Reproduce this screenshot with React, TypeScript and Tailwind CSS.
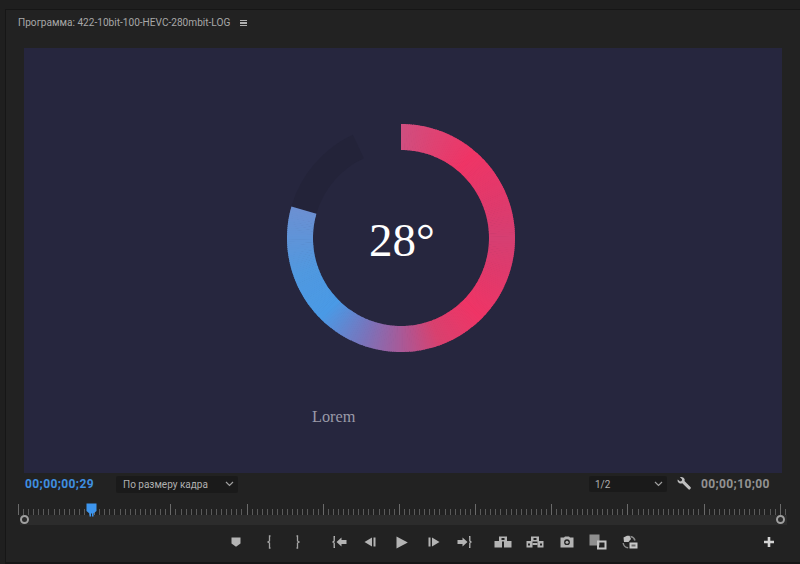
import React from "react";

const stops: [number, number[]][] = [
  [0, [0xcf, 0x4f, 0x80]],
  [20, [0xe0, 0x42, 0x72]],
  [40, [0xef, 0x35, 0x66]],
  [70, [0xe0, 0x3a, 0x6c]],
  [90, [0xd6, 0x3f, 0x72]],
  [110, [0xe0, 0x3a, 0x6c]],
  [135, [0xef, 0x35, 0x66]],
  [160, [0xd9, 0x41, 0x6f]],
  [180, [0xa8, 0x5a, 0x98]],
  [200, [0x7a, 0x74, 0xbb]],
  [225, [0x4a, 0x9a, 0xe6]],
  [250, [0x50, 0x99, 0xe0]],
  [286, [0x6c, 0x90, 0xd2]],
];

function colorAt(a: number) {
  for (let i = 0; i < stops.length - 1; i++) {
    const [a0, c0] = stops[i];
    const [a1, c1] = stops[i + 1];
    if (a >= a0 && a <= a1) {
      const t = (a - a0) / (a1 - a0);
      const c = c0.map((v, k) => Math.round(v + (c1[k] - v) * t));
      return `rgb(${c[0]},${c[1]},${c[2]})`;
    }
  }
  return "rgb(108,144,210)";
}

const CX = 120;
const CY = 120;
const R = 101;

function pt(a: number, r = R) {
  const rad = ((a - 90) * Math.PI) / 180;
  return [CX + r * Math.cos(rad), CY + r * Math.sin(rad)];
}

function arc(a0: number, a1: number) {
  const [x0, y0] = pt(a0);
  const [x1, y1] = pt(a1);
  return `M${x0.toFixed(2)} ${y0.toFixed(2)}A${R} ${R} 0 0 1 ${x1.toFixed(2)} ${y1.toFixed(2)}`;
}

function Ring() {
  const segs = [];
  for (let a = 0; a < 286; a += 1) {
    segs.push(
      <path key={a} d={arc(a, Math.min(a + 1.4, 286))} stroke={colorAt(a + 0.5)} strokeWidth={26} fill="none" />
    );
  }
  return (
    <svg width="240" height="240" viewBox="0 0 240 240" className="block">
      <path d={arc(286, 335)} stroke="#232339" strokeWidth={26} fill="none" />
      {segs}
    </svg>
  );
}

function Ruler() {
  const ticks = [];
  for (let i = 0; i < 152; i++) {
    ticks.push(
      <div key={i} className="w-[5.08px] h-[11px] shrink-0 flex items-end">
        <span className={i % 15 === 0 ? "w-px h-[11px] bg-[#6a6a6a]" : "w-px h-[6px] bg-[#5a5a5a]"} />
      </div>
    );
  }
  return <div className="flex h-[11px]">{ticks}</div>;
}

const I = ({ w = 16, h = 14, children }: { w?: number; h?: number; children: React.ReactNode }) => (
  <svg width={w} height={h} viewBox={`0 0 ${w} ${h}`} className="block text-[#b4b4b4]" fill="currentColor">
    {children}
  </svg>
);

const Marker = () => (
  <I w={10} h={10}>
    <path d="M.5.5h9v6L5 9.700.5 6.500z" />
  </I>
);
const MarkIn = () => (
  <I w={6} h={14}>
    <path d="M4.500 1H3.500V6L2 7l1.500 1v5h1" fill="none" stroke="#a4a4a4" strokeWidth="1.300" />
  </I>
);
const MarkOut = () => (
  <I w={6} h={14}>
    <path d="M1.500 1h1V6L4 7 2.500 8v5h-1" fill="none" stroke="#a4a4a4" strokeWidth="1.300" />
  </I>
);
const GoIn = () => (
  <I w={15} h={12}>
    <path d="M3 .5H2.200V5L1 6l1.200 1v4.500H3" fill="none" stroke="currentColor" strokeWidth="1.300" />
    <path d="M4.500 6l5-4.500V4h5v4h-5v2.500z" />
  </I>
);
const GoOut = () => (
  <I w={15} h={12}>
    <path d="M12 .5h.8V5L14 6l-1.200 1v4.500H12" fill="none" stroke="currentColor" strokeWidth="1.300" />
    <path d="M10.500 6l-5-4.500V4h-5v4h5v2.500z" />
  </I>
);
const StepBack = () => (
  <I w={12} h={10}>
    <path d="M8 .5v9L.5 5z" />
    <rect x="9.500" y=".5" width="2" height="9" />
  </I>
);
const StepFwd = () => (
  <I w={12} h={10}>
    <path d="M4 .5v9L11.500 5z" />
    <rect x=".5" y=".5" width="2" height="9" />
  </I>
);
const Play = () => (
  <I w={12} h={13}>
    <path d="M.5.5 11.800 6.500.5 12.500z" />
  </I>
);
const Lift = () => (
  <I w={18} h={12}>
    <path d="M5 .5h8v5H5zM7.500 2v2h3V2z" fillRule="evenodd" />
    <rect x=".5" y="5" width="7.500" height="6.500" />
    <rect x="10" y="5" width="7.500" height="6.500" />
  </I>
);
const Extract = () => (
  <I w={18} h={12}>
    <path d="M5 .5h8v5H5zM7.500 2v2h3V2z" fillRule="evenodd" />
    <path d="M.5 5h6v6.500h-6zM2 7.500v2h2v-2zM11.500 5h6v6.500h-6zM14 7.500v2h2v-2z" fillRule="evenodd" />
    <rect x="6.500" y="7" width="5" height="2" />
  </I>
);
const Camera = () => (
  <I w={14} h={12}>
    <path
      d="M4 1.500 5 .5h4l1 1h3.500v10H.5v-10zM7 3.300a2.900 2.900 0 1 0 0 5.800 2.900 2.900 0 0 0 0-5.800z"
      fillRule="evenodd"
    />
    <circle cx="7" cy="6.200" r="1.500" />
  </I>
);
const Compare = () => (
  <I w={18} h={16}>
    <rect x=".5" y=".5" width="10" height="11" fill="#8f8f8f" />
    <path d="M8 6.500h9.500v9H8zM10 8.500v5h5.500v-5z" fillRule="evenodd" fill="#c4c4c4" />
  </I>
);
const Export = () => (
  <I w={16} h={14}>
    <path d="M1.500 2.500 5 .8h2.500L9 4 6.500 7 2 7z" fill="#c0c0c0" />
    <path
      d="M8.500 1.500a5.600 5.600 0 0 1 4.500 4M1.200 8a5.600 5.600 0 0 0 5 4.800"
      fill="none"
      stroke="#8a8a8a"
      strokeWidth="1.500"
    />
    <path d="M7.500 7.500h8v6h-8z" fill="#c8c8c8" />
    <rect x="9.500" y="9.500" width="4" height="2" fill="#6a6a6a" />
  </I>
);
const Plus = () => (
  <I w={10} h={10}>
    <path d="M3.700 0h2.600v3.700H10v2.600H6.300V10H3.700V6.300H0V3.700h3.700z" fill="#d4d4d4" />
  </I>
);
const Wrench = () => (
  <I w={14} h={14}>
    <path d="M.8 2.400 3 4.500l1.700-.5.400-1.800L3 .2C4.800-.4 6.800.4 7.500 2c.2.700.2 1.400 0 2l6.200 6.200c.6.800-1 3-2 2.300L5.300 6.300C3.800 6.900 2.200 6.500 1.200 5.300.5 4.400.4 3.400.8 2.400z" fill="#c0c0c0" />
  </I>
);
const Chevron = () => (
  <svg width="9" height="6" viewBox="0 0 9 6" className="block" fill="none" stroke="#a0a0a0" strokeWidth="1.200">
    <path d="M1 1l3.500 3.500L8 1" />
  </svg>
);
const Menu = () => (
  <div className="flex flex-col gap-[1.5px] w-[7px] ml-[10px]">
    <span className="h-[1.200px] bg-[#b0b0b0]" />
    <span className="h-[1.200px] bg-[#b0b0b0]" />
    <span className="h-[1.200px] bg-[#b0b0b0]" />
  </div>
);

const Slot = ({ ml, children }: { ml: string; children: React.ReactNode }) => (
  <div className={`w-[18px] flex justify-center ${ml}`}>{children}</div>
);

export default function App() {
  return (
    <div
      className="w-[800px] h-[564px] overflow-hidden bg-[#1f1f1f] pl-[5px] pt-[9px] flex"
      style={{ fontFamily: 'Roboto, "Noto Sans", sans-serif' }}
    >
      <div className="flex-1 h-[555px] bg-[#222222] flex flex-col border-t border-l border-b-2 border-[#161616]">
        <div className="h-[38px] shrink-0 flex items-center pl-[12px] pb-[12px] text-[10.100px] text-[#a8a8a8]">
          <span>Программа: 422-10bit-100-HEVC-280mbit-LOG</span>
          <Menu />
        </div>
        <div className="ml-[18px] mr-[20px] h-[425px] shrink-0 bg-[#26263e] relative">
          <div className="absolute left-[257px] top-[70px]">
            <Ring />
          </div>
          <div
            className="absolute left-[345px] top-[162px] text-[47px] leading-[60px] text-white"
            style={{ fontFamily: '"Liberation Serif", serif' }}
          >
            28°
          </div>
          <div
            className="absolute left-[288px] top-[359px] text-[16.300px] leading-[20px] text-[#9a9aa8]"
            style={{ fontFamily: '"Liberation Serif", serif' }}
          >
            Lorem
          </div>
        </div>
        <div className="h-[22px] shrink-0 flex items-center pl-[19px] pr-[32px]">
          <span className="text-[12px] font-bold text-[#3f8fe0] w-[91px] tracking-[0.4px]">00;00;00;29</span>
          <div className="w-[122px] h-[17px] bg-[#1a1a1a] rounded-[2px] flex items-center justify-between pl-[7px] pr-[4px] text-[10px] text-[#b0b0b0]">
            <span>По размеру кадра</span>
            <Chevron />
          </div>
          <div className="flex-1" />
          <div className="w-[78px] h-[16px] bg-[#1a1a1a] rounded-[2px] flex items-center justify-between pl-[6px] pr-[4px] text-[10px] text-[#b0b0b0]">
            <span>1/2</span>
            <Chevron />
          </div>
          <div className="ml-[10px] mr-[10px]">
            <Wrench />
          </div>
          <span className="text-[12px] font-bold text-[#929292] tracking-[0.4px]">00;00;10;00</span>
        </div>
        <div className="h-[31px] shrink-0 ml-[12px] mr-[12px] relative flex flex-col pt-[9px]">
          <Ruler />
          <div className="h-[10px] bg-[#2c2c2c] ml-[2px] mr-[3px]" />
          <div className="absolute left-[2px] top-[20px] w-[9px] h-[9px] rounded-full border-2 border-[#a0a0a0] bg-[#2a2a2a]" />
          <div className="absolute right-[5px] top-[20px] w-[9px] h-[9px] rounded-full border-2 border-[#a0a0a0] bg-[#2a2a2a]" />
          <svg width="11" height="14" viewBox="0 0 11 14" className="absolute left-[68px] top-[8px]">
            <path d="M.5.5h10v7.500L7.500 10.500v3H6v-3H5v3H3.500v-3L.5 8z" fill="#3d95ee" />
          </svg>
        </div>
        <div className="flex-1 flex items-center pr-[28px] pb-[4px]">
          <Slot ml="ml-[221px]"><Marker /></Slot>
          <Slot ml="ml-[15px]"><MarkIn /></Slot>
          <Slot ml="ml-[11px]"><MarkOut /></Slot>
          <Slot ml="ml-[23px]"><GoIn /></Slot>
          <Slot ml="ml-[13px]"><StepBack /></Slot>
          <Slot ml="ml-[14px]"><Play /></Slot>
          <Slot ml="ml-[14px]"><StepFwd /></Slot>
          <Slot ml="ml-[12px]"><GoOut /></Slot>
          <Slot ml="ml-[21px]"><Lift /></Slot>
          <Slot ml="ml-[14px]"><Extract /></Slot>
          <Slot ml="ml-[14px]"><Camera /></Slot>
          <Slot ml="ml-[13px]"><Compare /></Slot>
          <Slot ml="ml-[14px]"><Export /></Slot>
          <div className="flex-1" />
          <Plus />
        </div>
      </div>
    </div>
  );
}
